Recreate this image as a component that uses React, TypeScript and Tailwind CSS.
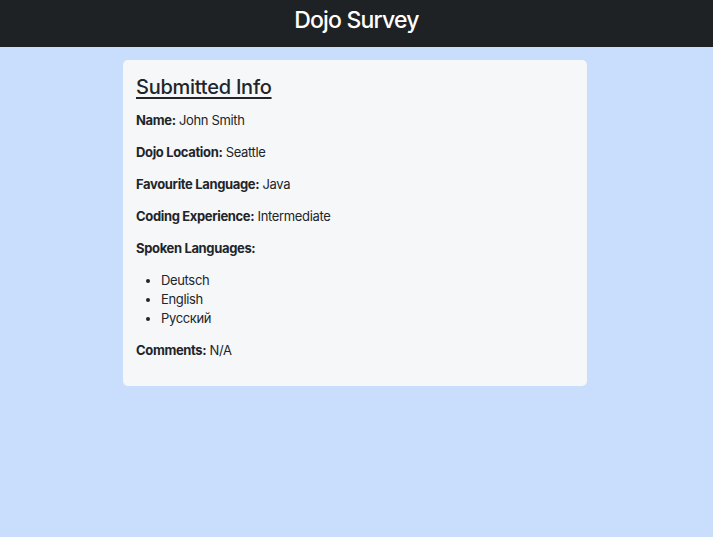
const languages = ["Deutsch", "English", "Русский"];

function Row({ label, value }: { label: string; value?: string }) {
  return (
    <p className="mb-[13px] leading-[19px]">
      <span className="font-bold">{label}</span>
      {value ? ` ${value}` : null}
    </p>
  );
}

export default function App() {
  return (
    <div className="min-h-[537px] bg-[#c9ddfc] font-['Inter',sans-serif] text-[#212529]">
      <header className="h-[47px] bg-[#1f2225] pt-[6px] text-center">
        <h1 className="text-[23px] leading-[29px] font-medium tracking-[-0.8px] text-white">Dojo Survey</h1>
      </header>

      <div className="pt-[13px] pr-[3px]">
        <div className="mx-auto w-[464px] rounded-[5px] bg-[#f6f7f9] px-[13px] pt-[15px] pb-[13px] text-[13px] tracking-[-0.35px]">
          <h2 className="mb-[12px] text-[20px] leading-[24px] font-medium tracking-[-0.25px] underline underline-offset-[3px]">
            Submitted Info
          </h2>
          <Row label="Name:" value="John Smith" />
          <Row label="Dojo Location:" value="Seattle" />
          <Row label="Favourite Language:" value="Java" />
          <Row label="Coding Experience:" value="Intermediate" />
          <Row label="Spoken Languages:" />
          <ul className="mb-[13px] list-disc pl-[25px] leading-[19px]">
            {languages.map((l) => (
              <li key={l}>{l}</li>
            ))}
          </ul>
          <Row label="Comments:" value="N/A" />
        </div>
      </div>
    </div>
  );
}
